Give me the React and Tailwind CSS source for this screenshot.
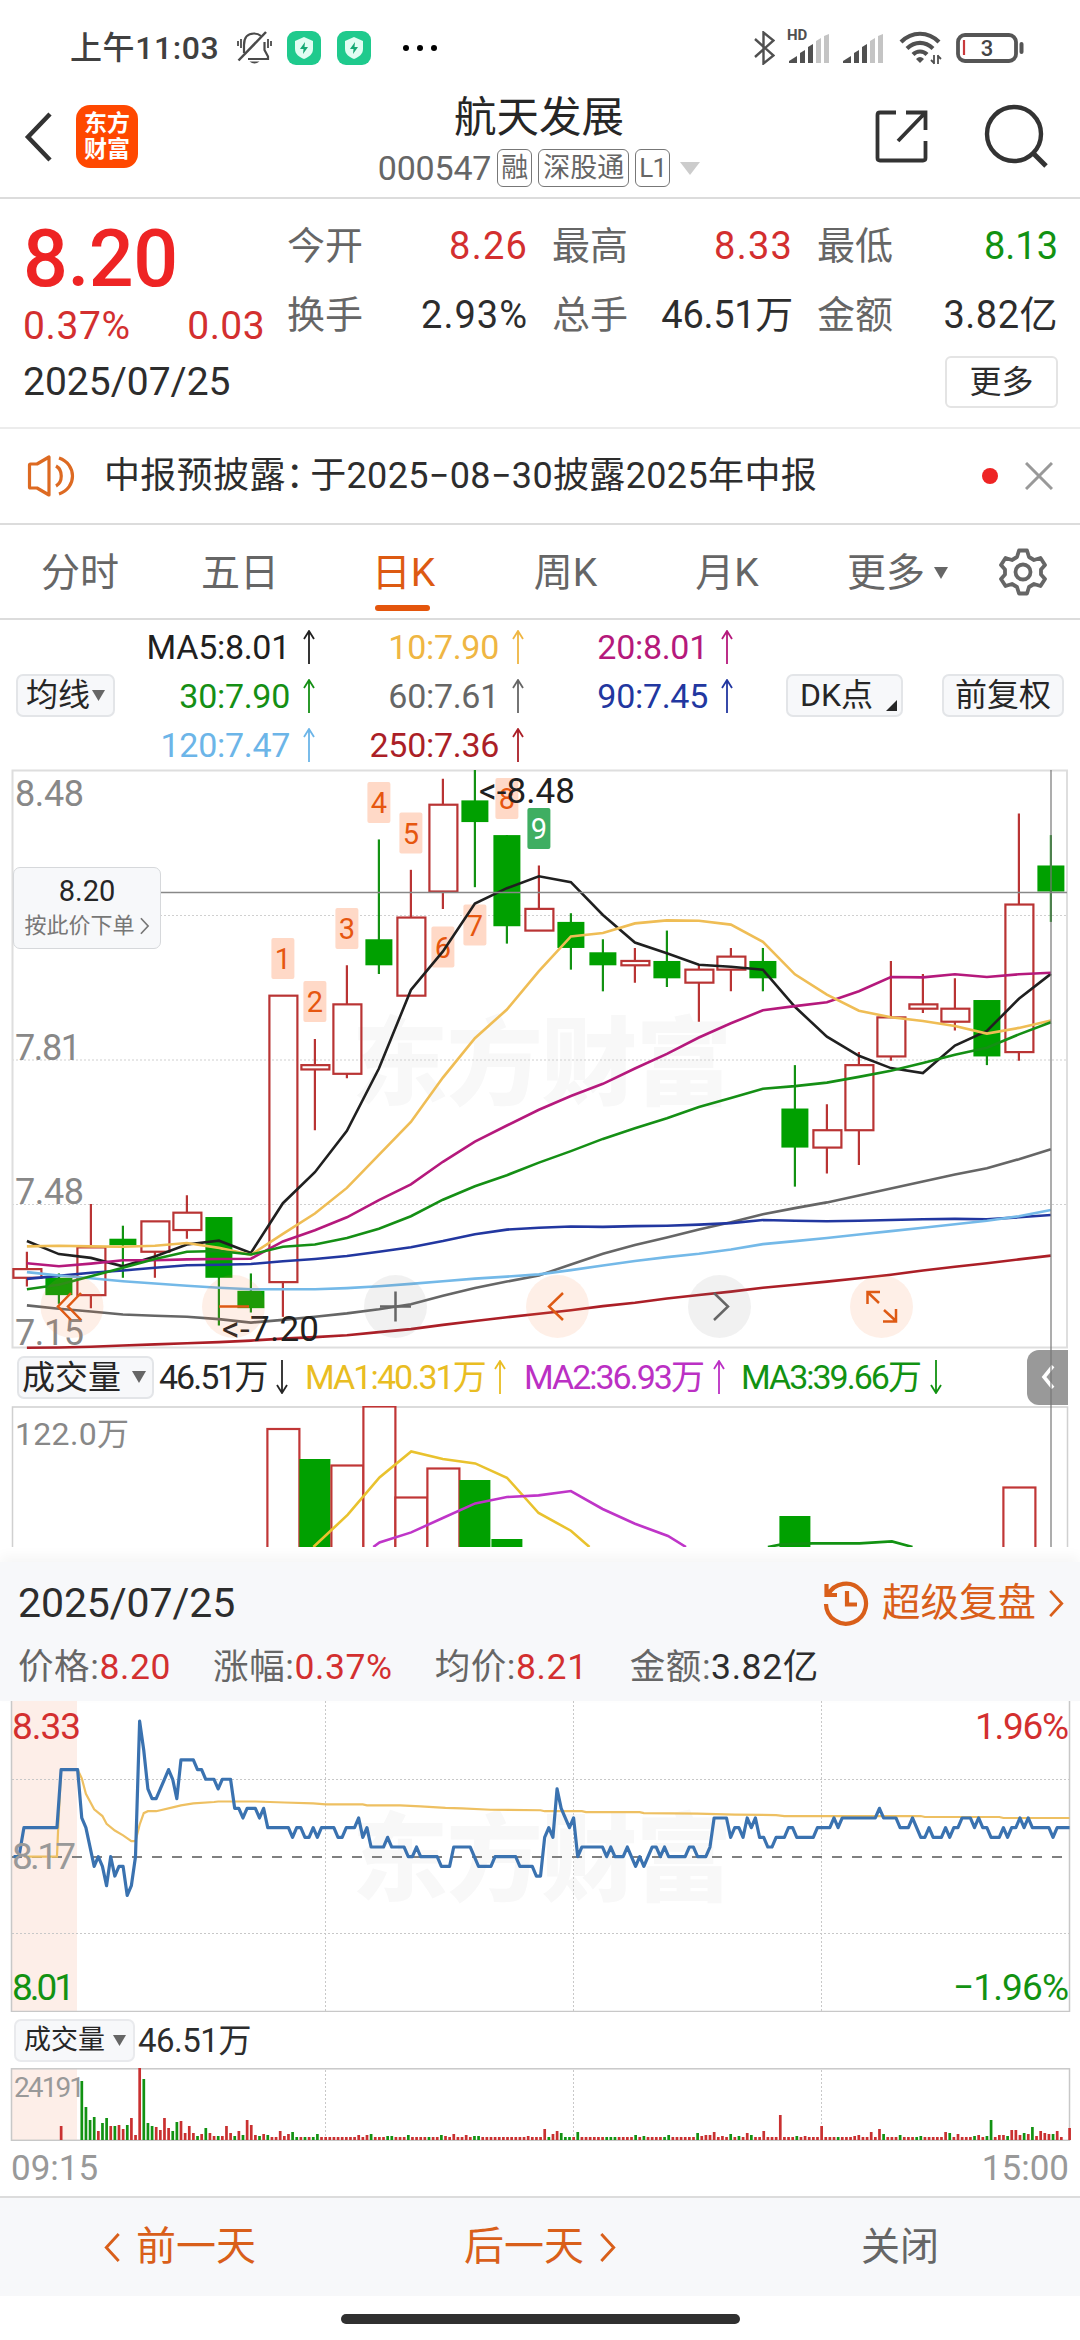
const STEP = 32;
const FIRST_X = 26.9;
const cx = (i) => FIRST_X + i * STEP;
const priceY = (p) => (8.48 - p) * 434;

// [open, close, high, low]
const CANDLES = [
  [7.31, 7.33, 7.37, 7.29],
  [7.31, 7.27, 7.32, 7.25],
  [7.27, 7.38, 7.48, 7.24],
  [7.4, 7.385, 7.43, 7.31],
  [7.37, 7.44, 7.44, 7.31],
  [7.42, 7.46, 7.5, 7.4],
  [7.45, 7.31, 7.45, 7.2],
  [7.28, 7.24, 7.32, 7.23],
  [7.3, 7.96, 7.96, 7.22],
  [7.79, 7.8, 7.86, 7.65],
  [7.78, 7.94, 8.03, 7.77],
  [8.09, 8.03, 8.32, 8.01],
  [7.96, 8.14, 8.25, 7.96],
  [8.2, 8.4, 8.46, 8.16],
  [8.41, 8.36, 8.48, 8.21],
  [8.33, 8.12, 8.33, 8.08],
  [8.11, 8.16, 8.26, 8.11],
  [8.13, 8.07, 8.15, 8.02],
  [8.06, 8.03, 8.09, 7.97],
  [8.03, 8.04, 8.07, 7.99],
  [8.04, 8.0, 8.11, 7.98],
  [7.99, 8.02, 8.03, 7.9],
  [8.02, 8.05, 8.07, 7.97],
  [8.04, 8.0, 8.07, 7.97],
  [7.7, 7.61, 7.8, 7.52],
  [7.61, 7.65, 7.71, 7.55],
  [7.65, 7.8, 7.83, 7.57],
  [7.82, 7.91, 8.04, 7.81],
  [7.93, 7.94, 8.01, 7.92],
  [7.9, 7.93, 8.0, 7.88],
  [7.95, 7.82, 7.95, 7.8],
  [7.83, 8.17, 8.38, 7.81],
  [8.26, 8.2, 8.33, 8.13],
];

const AVERAGES = [
  {
    color: '#666666',
    ys: [535.4, 538.8, 541.5, 544.5, 545.7, 546.8, 549.1, 552.6, 549.9, 546.8, 543.4, 539.2, 534.2, 525.8, 518.1, 511.6, 505.5, 494.4, 483.7, 474.9, 467.6, 459.6, 452.3, 444.3, 438.1, 432.4, 425.5, 418.6, 411.4, 404.5, 398.3, 389.2, 379.2],
  },
  {
    color: '#2237a0',
    ys: [508.9, 505.9, 502.8, 500.5, 497.8, 495.2, 494.8, 494, 491.3, 489, 486, 481.8, 477.2, 471.1, 464.2, 459.6, 457.7, 456.5, 456.9, 456.1, 455.7, 454.6, 453.1, 450, 450.8, 451.2, 450.8, 450, 449.2, 448.9, 449.2, 447.3, 445],
  },
  {
    color: '#74b9e8',
    ys: [502.1, 505.5, 508.2, 511.2, 513.5, 515.8, 517.7, 519.3, 519.3, 519.3, 518.1, 516.2, 513.9, 511.2, 508.6, 506.6, 504.4, 500.1, 495.5, 491, 487.1, 483.7, 479.5, 474.1, 471.1, 468, 464.5, 461.1, 457.7, 454.2, 450.8, 446.2, 440],
  },
  {
    color: '#ab1f27',
    ys: [577.8, 577.5, 576.7, 575.5, 574.4, 573.2, 572.1, 570.6, 568.6, 567.1, 565.2, 562.1, 559.1, 554.9, 551, 547.2, 543.8, 540.3, 536.1, 532.7, 528.5, 525, 521.6, 517.8, 514.7, 511.6, 508.2, 504.7, 500.5, 496.7, 493.3, 489.4, 485.6],
  },
  {
    color: '#202020',
    ys: [471, 484.1, 487.9, 496.3, 486.4, 474.5, 470.7, 482.9, 433.2, 402.2, 360.8, 298.5, 220, 181.4, 133.5, 118.2, 106.3, 112.1, 145, 172.5, 183.3, 194.7, 196.7, 199.7, 236.8, 266.7, 285.8, 298.1, 303, 275.5, 261, 228.8, 203.9],
  },
  {
    color: '#b5197c',
    ys: [493.3, 496.3, 493.6, 490.2, 490.2, 489.4, 489, 488.7, 471.4, 460.3, 447.3, 430.1, 414.4, 391.8, 371.6, 355.5, 339.8, 326, 313.8, 298.5, 283.9, 267.5, 253.3, 240.3, 236.1, 232.3, 221.2, 207, 207.4, 204.3, 207, 204.3, 202.8],
  },
  {
    color: '#efbd55',
    ys: [476.4, 475.7, 476.4, 476.8, 475.7, 473, 477.9, 484.8, 463.8, 443.5, 417.9, 384.9, 352, 307.6, 268.2, 239.5, 201.2, 166.4, 163, 153.4, 150.4, 150.7, 154.6, 171.8, 204.3, 224.6, 240.7, 247.2, 251, 256, 263.6, 257.9, 250.6],
  },
  {
    color: '#158f15',
    ys: [519.3, 514.7, 506.3, 497.8, 489, 481.8, 481, 484.5, 476.8, 474.5, 468, 458.8, 446.2, 429.7, 416.3, 405.2, 392.6, 381.1, 368.9, 358.2, 348.2, 337.1, 327.9, 318.7, 316.1, 312.6, 306.9, 300.8, 293.1, 284.7, 277.8, 264.4, 252.2],
  },
];

// top of each countdown badge, starting with candle 8
const BADGE_TOPS = [168, 211, 138, 12, 42.5, 156.5, 134.5, 8, 38];

const MA_ROWS = [
  [
    { label: 'MA5:8.01', color: 'text-[#202020]' },
    { label: '10:7.90', color: 'text-[#efb643]' },
    { label: '20:8.01', color: 'text-[#b5197c]' },
  ],
  [
    { label: '30:7.90', color: 'text-[#158f15]' },
    { label: '60:7.61', color: 'text-[#666666]' },
    { label: '90:7.45', color: 'text-[#2237a0]' },
  ],
  [
    { label: '120:7.47', color: 'text-[#6cb5e8]' },
    { label: '250:7.36', color: 'text-[#ab1f27]' },
  ],
];

// [minute, ticks above 8.17]
const MINUTES = [
  [0.5, 0], [1.8, 0], [3, 3], [11, 3], [12, 9], [16, 9], [17, 4], [18, 3], [20, -1], [21, 0], [22, -1], [23, -3], [24, 0],
  [25, -2], [26, -1], [27, -1], [28, -4], [29, -3], [30, 0], [31, 14], [32, 11], [33, 7], [34, 6], [35, 6], [37, 8],
  [38, 9], [39, 8], [40, 6], [41, 10], [44, 10], [45, 9], [46, 9], [47, 8], [49, 8], [50, 7], [51, 8], [53, 8], [54, 5],
  [55, 5], [56, 4], [57, 5], [59, 5], [60, 4], [61, 5], [62, 3], [67, 3], [68, 2], [69, 3], [70, 3], [71, 2], [72, 2],
  [73, 3], [74, 2], [75, 3], [78, 3], [79, 2], [80, 2], [81, 3], [83, 3], [84, 4], [85, 2], [86, 3], [87, 1], [90, 1],
  [91, 2], [92, 1], [95, 1], [96, 0], [97, 0], [98, 1], [99, 0], [103, 0], [104, -1], [106, -1], [107, 1], [111, 1],
  [113, -1], [116, -1], [117, 0], [122, 0], [123, -1], [126, -1], [127, -2], [128, -2], [129, 2], [130, 3], [131, 2],
  [132, 7], [133, 5], [135, 3], [136, 4], [137, 0], [138, 1], [143, 1], [144, 0], [145, 1], [146, 0], [148, 0],
  [149, 1], [151, -1], [152, 0], [153, -1], [155, 1], [156, 1], [157, 0], [158, 1], [159, 0], [163, 0], [164, 1],
  [165, 1], [166, 0], [168, 0], [169, 1], [170, 4], [173, 4], [174, 2], [175, 3], [176, 3], [177, 2], [178, 4],
  [179, 3], [180, 4], [181, 2], [182, 2], [183, 1], [184, 1], [185, 2], [187, 2], [188, 3], [189, 3], [190, 2],
  [194, 2], [195, 3], [198, 3], [199, 4], [200, 3], [201, 4], [209, 4], [210, 5], [211, 4], [214, 4], [215, 3],
  [217, 3], [218, 4], [220, 2], [221, 2], [222, 3], [223, 2], [225, 2], [226, 3], [227, 2], [228, 3], [229, 3],
  [230, 4], [232, 4], [233, 3], [234, 4], [235, 3], [236, 3], [237, 2], [239, 2], [240, 3], [241, 2], [242, 3],
  [243, 3], [244, 4], [245, 3], [246, 4], [247, 3], [251, 3], [252, 2], [253, 3], [256, 3],
];

const AVG_PRICE = [
  [3, 0], [11, 0], [11.3, 3], [12, 9], [16, 9], [17, 8.1], [18, 6.5], [20, 4.9], [22, 4.2], [23, 3.4], [25, 2.7], [27, 2.2],
  [29, 1.6], [30, 1.6], [31, 3.3], [32, 4.5], [33, 4.7], [35, 4.7], [39, 5.1], [41, 5.3], [44, 5.5], [49, 5.65],
  [50, 5.7], [59, 5.7], [66, 5.6], [73, 5.5], [76, 5.4], [85, 5.4], [86, 5.3], [94, 5.3], [99, 5.2], [105, 5.05],
  [109, 5], [116, 4.85], [128, 4.8], [129, 4.7], [138, 4.7], [139, 4.6], [152, 4.6], [153, 4.5], [166, 4.45],
  [175, 4.35], [185, 4.3], [187, 4.2], [220, 4.2], [221, 4.1], [239, 4.1], [240, 4], [256, 4],
];

const OPENING_VOLUME =
  'g59 g33 g20 g23 r9 g17 g22 r14 g14 r15 r11 g15 r22 r5 r72 g61 g17 g14 r13 r10 r22 r12 g9 g18 r19 r7 r14 r7 g4 r6 g12 r7 r4 g4 r4 r14 r7 g4 r9 g5 r20 r15 r5 g4 r6 g5 r3 r3 r9 r4 r6 g8 g3'.split(
    ' ',
  );

const LATER_VOLUME = {
  71: 'g3', 72: 'r3', 73: 'g3', 74: 'g6', 84: 'r5', 86: 'r5', 87: 'g6', 91: 'g4', 92: 'g4', 96: 'g5', 101: 'g3',
  104: 'g5', 105: 'r4', 107: 'r6', 110: 'r5', 112: 'g4', 113: 'g4', 125: 'r4', 129: 'r11', 130: 'g3', 131: 'r6',
  132: 'r9', 133: 'g7', 134: 'g3', 135: 'g3', 137: 'g8', 144: 'g3', 145: 'g3', 146: 'g3', 151: 'g5', 153: 'g4',
  158: 'g3', 159: 'g5', 166: 'g7', 167: 'r4', 168: 'r5', 169: 'r5', 170: 'r8', 172: 'r4', 174: 'g6', 176: 'g4',
  178: 'r7', 179: 'g5', 182: 'r9', 186: 'r25', 190: 'g4', 192: 'r4', 196: 'r14', 200: 'g3', 204: 'r4', 205: 'r5',
  208: 'r8', 210: 'r11', 211: 'g6', 215: 'g5', 219: 'g3', 220: 'g4', 226: 'r8', 227: 'g7', 229: 'r6', 233: 'g4',
  234: 'r5', 236: 'g4', 237: 'g20', 239: 'r5', 240: 'r5', 241: 'g4', 242: 'r10', 243: 'r10', 244: 'r5', 245: 'g7',
  246: 'r6', 247: 'g13', 248: 'r4', 249: 'r9', 250: 'r7', 251: 'r6', 252: 'g6', 253: 'r9', 254: 'r3', 255: 'r0',
  256: 'r12',
};

const minuteX = (m) => 11.5 + m * 4.133;

function Arrow({ down }) {
  return (
    <svg
      className={`h-[34px] w-3 shrink-0 ${down ? 'rotate-180' : ''}`}
      viewBox="0 0 12 34"
      fill="none"
      stroke="currentColor"
      strokeWidth="1.8"
    >
      <path d="M6 34V2M1 9L6 1L11 9" />
    </svg>
  );
}

function Chevron({ left, className }) {
  return (
    <svg className={className} viewBox="0 0 16 30" fill="none" stroke="currentColor" strokeWidth="2.8">
      <path d={left ? 'M14 2L2 15L14 28' : 'M2 2L14 15L2 28'} />
    </svg>
  );
}

function Triangle({ className }) {
  return (
    <svg className={className} viewBox="0 0 12 12" preserveAspectRatio="none" fill="currentColor">
      <path d="M0 0H12L6 12Z" />
    </svg>
  );
}

function MutedBell() {
  return (
    <svg className="h-[34px] w-[35px]" viewBox="0 0 35 34" fill="none" stroke="#4a4a4a" strokeWidth="2.2">
      <path d="M7 22V14C7 6 11 2.500 17 2.500C20 2.500 22 3.200 24 5M27.500 11V19L31 25.500V28H11" />
      <path d="M29 1L1.500 29.500" strokeWidth="2.500" />
      <path d="M4 8V17M1 10V15M31 8V17M34 10V15" strokeWidth="1.800" />
      <path d="M12.500 30.500H22.500Q17.500 34.500 12.500 30.500Z" fill="#4a4a4a" stroke="none" />
    </svg>
  );
}

function Signal() {
  return (
    <svg className="h-[29px] w-[41px]" viewBox="0 0 41 29">
      <path d="M0 29V27L8 22V29Z" fill="#505050" />
      <path d="M11 29V19L16 16V29Z" fill="#505050" />
      <path d="M19 29V13L24 10V29Z" fill="#505050" />
      <path d="M27 29V7L32 4V29ZM35 29V2L40 0V29Z" fill="#c4c4c4" />
    </svg>
  );
}

function Shield() {
  return (
    <div className="flex size-[34px] items-center justify-center rounded-[9px] bg-[#1fca8d]">
      <svg className="h-[22px] w-[20px]" viewBox="0 0 20 22">
        <path d="M10 0L19 4V12C19 17 15 20 10 22C5 20 1 17 1 12V4Z" fill="#e2fdf2" />
        <path d="M11 5L6 12H9.500L9 17L14 10H10.500Z" fill="#16a873" />
      </svg>
    </div>
  );
}

function StatusBar() {
  return (
    <div className="flex h-[95px] shrink-0 items-center pl-[70px] pr-[56px]">
      <span className="w-[167px] whitespace-nowrap text-[32px] font-medium tracking-[0.6px] text-[#404040]">
        上午11:03
      </span>
      <MutedBell />
      <div className="ml-[15px] flex gap-4">
        <Shield />
        <Shield />
      </div>
      <div className="ml-[32px] flex gap-[8px]">
        <i className="size-[6px] rounded-full bg-black" />
        <i className="size-[6px] rounded-full bg-black" />
        <i className="size-[6px] rounded-full bg-black" />
      </div>
      <div className="ml-auto flex items-center">
        <svg className="h-[34px] w-[21px]" viewBox="0 0 21 34" fill="none" stroke="#505050" strokeWidth="2.400">
          <path d="M1 8L19.500 24.500L9.500 32.500V1.500L19.500 9.500L1 26" />
        </svg>
        <div className="relative ml-[14px] pt-[2px]">
          <span className="absolute -left-[2px] -top-[5px] text-[15px] font-bold leading-4 text-[#505050]">HD</span>
          <Signal />
        </div>
        <div className="ml-[13px] pt-[2px]">
          <Signal />
        </div>
        <svg className="ml-[15px] h-[34px] w-[44px]" viewBox="0 0 44 34" fill="none" stroke="#505050" strokeWidth="4.200">
          <path d="M2 11C13 0 29 0 40 11" />
          <path d="M8 17.500C16 10 26 10 34 17.500" />
          <path d="M14 23.500C18 19.500 24 19.500 28 23.500" />
          <path d="M17 28Q21 24 25 28L21 32Z" fill="#505050" stroke="none" />
          <path d="M35 24V33M35.500 32.500L32 29M39 33V24M38.500 24.500L42 28" strokeWidth="1.800" />
        </svg>
        <svg className="ml-[13px] h-[30px] w-[68px]" viewBox="0 0 68 30">
          <rect x="2" y="2" width="58" height="26" rx="7" fill="none" stroke="#555" strokeWidth="3.800" />
          <path d="M65.500 11V19" stroke="#555" strokeWidth="4" strokeLinecap="round" />
          <path d="M8 7V22" stroke="#c93a3c" strokeWidth="2.200" />
          <text x="31" y="22.500" textAnchor="middle" fontSize="22" fontWeight="500" fill="#444">
            3
          </text>
        </svg>
      </div>
    </div>
  );
}

function Header() {
  return (
    <div className="flex h-[104px] shrink-0 justify-between border-b-2 border-[#dcdcdc] pl-6 pr-[30px]">
      <div className="flex w-[330px] items-start gap-6 pt-[10px]">
        <svg className="mt-[7px] h-[50px] w-[28px]" viewBox="0 0 28 50" fill="none" stroke="#333" strokeWidth="4.500">
          <path d="M26 2L4 25L26 48" />
        </svg>
        <div className="flex h-[63px] w-[62px] flex-col items-center justify-center rounded-[14px] bg-[#ff4800] text-[23px] font-bold leading-[26px] text-white">
          <span>东方</span>
          <span>财富</span>
        </div>
      </div>
      <div className="flex flex-col items-center whitespace-nowrap">
        <h1 className="pl-1 text-[42.5px] leading-[46px] text-[#262626]">航天发展</h1>
        <div className="mt-[8px] flex items-center gap-[6px] pl-1 text-[#666]">
          <span className="text-[34px] leading-[38px] tracking-[-0.2px]">000547</span>
          <span className="rounded-[6px] border border-[#777] px-[3px] text-[27px] leading-[36px]">融</span>
          <span className="rounded-[6px] border border-[#777] px-[4px] text-[27px] leading-[36px]">深股通</span>
          <span className="rounded-[6px] border border-[#777] px-[3px] text-[26px] leading-[36px] tracking-[-0.8px]">L1</span>
          <Triangle className="ml-1 h-[13px] w-5 text-[#ccc]" />
        </div>
      </div>
      <div className="flex w-[330px] justify-end gap-[54px] pt-[9px]">
        <svg className="mt-[3px] h-[58px] w-[58px]" viewBox="0 0 58 58" fill="none" stroke="#333" strokeWidth="3.800">
          <path d="M24 5.500H8Q5.500 5.500 5.500 8V51Q5.500 53.500 8 53.500H51Q53.500 53.500 53.500 51V34M34 5.500H53.500V23M52 7L26 34" />
        </svg>
        <svg className="h-[66px] w-[66px]" viewBox="0 0 66 66" fill="none" stroke="#333" strokeWidth="4.400">
          <circle cx="30" cy="30" r="27" />
          <path d="M49 49L62 62" strokeWidth="5" />
        </svg>
      </div>
    </div>
  );
}

function Stat({ name, value, color, className }) {
  return (
    <div className={`flex items-center justify-between ${className}`}>
      <span className="text-[38px] text-[#666]">{name}</span>
      <span className={`text-[38px] ${color}`}>{value}</span>
    </div>
  );
}

function Quote() {
  return (
    <div className="flex h-[230px] shrink-0 flex-col border-b-2 border-[#ececec] pl-[23px] pr-[22px] text-[#2d2d2d]">
      <div className="flex">
        <div className="w-[265px] pt-[22px]">
          <div className="text-[79px] font-medium leading-[76px] tracking-[-0.5px] text-[#ee2424]">8.20</div>
          <div className="mt-[7px] flex w-[242px] justify-between text-[39px] leading-[44px] text-[#d32f2f]">
            <span className="tracking-[0.6px]">0.37%</span>
            <span className="tracking-[0.4px]">0.03</span>
          </div>
        </div>
        <div className="flex flex-1 flex-col pt-[12px] leading-[68px]">
          <div className="flex h-[69px] gap-[24px]">
            <Stat name="今开" value="8.26" color="tracking-[1.2px] text-[#d32f2f]" className="w-[241px]" />
            <Stat name="最高" value="8.33" color="tracking-[1.2px] text-[#d32f2f]" className="w-[241px]" />
            <Stat name="最低" value="8.13" color="text-[#129212]" className="w-[241px]" />
          </div>
          <div className="flex h-[69px] gap-[24px]">
            <Stat name="换手" value="2.93%" color="tracking-[1px]" className="w-[241px]" />
            <Stat name="总手" value="46.51万" color="tracking-[-0.3px]" className="w-[241px]" />
            <Stat name="金额" value="3.82亿" color="tracking-[0.5px]" className="w-[241px]" />
          </div>
        </div>
      </div>
      <div className="mt-[7px] flex items-center justify-between">
        <span className="text-[39px] leading-[52px]">2025/07/25</span>
        <span className="w-[113px] rounded-[6px] border-2 border-[#e4e4e4] text-center text-[32px] leading-[48px]">
          更多
        </span>
      </div>
    </div>
  );
}

function Notice() {
  return (
    <div className="flex h-[96px] shrink-0 items-center border-b-2 border-[#dcdcdc] pl-[27px] pr-[27px]">
      <svg className="h-[42px] w-[48px]" viewBox="0 0 48 42" fill="none" stroke="#dd6a22" strokeWidth="3.200">
        <path d="M2.500 10Q2.500 9 3.500 9H10L22 2V40L10 33H3.500Q2.500 33 2.500 32Z" strokeLinejoin="round" />
        <path d="M29 11C36 15 36 27 29 31M32 3C50 9 50 33 32 39" />
      </svg>
      <span className="ml-[29px] whitespace-nowrap text-[36px] tracking-[0.35px] text-[#2d2d2d]">
        中报预披露<span className="-mr-[12px]">：</span>于2025−08−30披露2025年中报
      </span>
      <i className="ml-auto size-4 rounded-full bg-[#ee2424]" />
      <svg className="ml-[27px] size-[28px]" viewBox="0 0 28 28" stroke="#999" strokeWidth="3">
        <path d="M1 1L27 27M27 1L1 27" />
      </svg>
    </div>
  );
}

function Tabs() {
  return (
    <div className="flex h-[95px] shrink-0 items-center border-b-2 border-[#dcdcdc] pt-[3px] text-[39px] text-[#666]">
      <span className="w-[160px] text-center">分时</span>
      <span className="w-[160px] text-center">五日</span>
      <span className="relative w-[167px] text-center text-[#dd5a12]">
        日K
        <i className="absolute -bottom-[18px] left-[55px] h-[6px] w-[55px] rounded-full bg-[#e4550c]" />
      </span>
      <span className="w-[157px] text-center">周K</span>
      <span className="w-[166px] text-center">月K</span>
      <span className="ml-[37px]">更多</span>
      <Triangle className="ml-[9px] h-3 w-[14px]" />
      <svg className="mb-[3px] ml-[51px] size-[48px]" viewBox="0 0 48 48" fill="none" stroke="#666" strokeWidth="3.800">
        <path
          d="M20 2.500H28L30 9L35 12L41.500 10L46 17L42 21.500V26.500L46 31L41.500 38L35 36L30 39L28 45.500H20L18 39L13 36L6.500 38L2 31L6 26.500V21.500L2 17L6.500 10L13 12L18 9Z"
          strokeLinejoin="round"
        />
        <circle cx="24" cy="24" r="7.500" />
      </svg>
    </div>
  );
}

function MaLegend() {
  return (
    <div className="flex h-[150px] shrink-0 items-center pl-4 pr-4 text-[#262626]">
      <div className="flex h-[43px] w-[99px] items-center justify-center gap-[2px] rounded-[7px] border-2 border-[#e3e5e8] bg-[#f7f8fa] text-[32px]">
        均线
        <Triangle className="h-[11px] w-[13px] text-[#666]" />
      </div>
      <div className="flex h-full flex-col pt-[2px]">
        {MA_ROWS.map((row, r) => (
          <div key={r} className="flex h-[49px]">
            {row.map((ma, i) => (
              <div
                key={ma.label}
                className={`flex items-center justify-end gap-[13px] whitespace-nowrap text-[34px] tracking-[-0.3px] ${ma.color} ${
                  i === 0 ? 'w-[200px]' : 'w-[209px]'
                }`}
              >
                {ma.label}
                <Arrow />
              </div>
            ))}
          </div>
        ))}
      </div>
      <div className="relative ml-auto flex h-[43px] w-[117px] items-center rounded-[7px] border-2 border-[#e3e5e8] bg-[#f7f8fa] pl-3 text-[32px]">
        DK点
        <svg className="absolute bottom-[4px] right-[4px] size-[11px]" viewBox="0 0 11 11">
          <path d="M11 0V11H0Z" fill="#262626" />
        </svg>
      </div>
      <div className="ml-[39px] flex h-[43px] w-[122px] items-center justify-center rounded-[7px] border-2 border-[#e3e5e8] bg-[#f7f8fa] text-[32px]">
        前复权
      </div>
    </div>
  );
}

function Candle({ data, x }) {
  const [open, close, high, low] = data;
  const top = priceY(Math.max(open, close));
  const bottom = priceY(Math.min(open, close));
  if (close < open) {
    return (
      <g>
        <path d={`M${x} ${priceY(high)}V${priceY(low)}`} stroke="#129212" strokeWidth="2.2" />
        <rect x={x - 13.5} y={top} width="27" height={bottom - top} fill="#00a000" />
      </g>
    );
  }
  return (
    <g fill="none" stroke="#b93434" strokeWidth="2.2">
      <path d={`M${x} ${priceY(high)}V${top}M${x} ${bottom}V${priceY(low)}`} />
      <rect x={x - 13.5} y={top} width="28" height={bottom - top} />
    </g>
  );
}

function Watermark({ y }) {
  return (
    <text x="352" y={y} fontSize="96" fontWeight="900" textLength="380" fill="#f8f8f8">
      东方财富
    </text>
  );
}

function KChart() {
  return (
    <div className="relative h-[578px] shrink-0">
      <svg className="block h-[578px] w-[1080px] overflow-visible" viewBox="0 0 1080 578">
        <Watermark y={327} />
        <g stroke="#d0d0d0" strokeWidth="1.2" strokeDasharray="2 2">
          <path d="M12 145.500H1067M12 290H1067M12 434.500H1067" />
        </g>
        <rect x="12.500" y="0.500" width="1054.500" height="577" fill="none" stroke="#dedede" strokeWidth="2" />
        <g fontSize="36" fill="#888">
          <text x="15" y="36" textLength="69">8.48</text>
          <text x="15" y="290" textLength="66">7.81</text>
          <text x="15" y="434" textLength="69">7.48</text>
          <text x="15" y="575" textLength="69">7.15</text>
        </g>
        {CANDLES.map((c, i) => (
          <Candle key={i} data={c} x={cx(i)} />
        ))}
        {BADGE_TOPS.map((top, i) => (
          <g key={i}>
            <rect x={cx(i + 8) - 11.5} y={top} width="23" height="41" rx="2" fill={i === 8 ? '#3fae62' : '#ffd9c7'} />
            <text
              x={cx(i + 8)}
              y={top + 31}
              textAnchor="middle"
              fontSize="29"
              fill={i === 8 ? '#fff' : '#e6560f'}
            >
              {i + 1}
            </text>
          </g>
        ))}
        {AVERAGES.map((ma) => (
          <polyline
            key={ma.color}
            points={ma.ys.map((y, i) => `${cx(i)},${y}`).join(' ')}
            fill="none"
            stroke={ma.color}
            strokeWidth="2.6"
          />
        ))}
        <text x="479" y="33" fontSize="35" fill="#202020" textLength="96">
          {'<-8.48'}
        </text>
        <text x="222" y="571" fontSize="35" fill="#202020" textLength="97">
          {'<-7.20'}
        </text>
        <path d="M160 122.500H1067" stroke="#888" strokeWidth="1.700" />

        {/* Chart tools */}
        <g fill="#f47b3c" fillOpacity="0.12">
          <circle cx="72" cy="536.500" r="31.500" />
          <circle cx="233.500" cy="536.500" r="31.500" />
          <circle cx="557.500" cy="536.500" r="31.500" />
          <circle cx="881.500" cy="536.500" r="31.500" />
        </g>
        <g fill="#777" fillOpacity="0.1">
          <circle cx="395.500" cy="536.500" r="31.500" />
          <circle cx="719.500" cy="536.500" r="31.500" />
        </g>
        <g fill="none" stroke="#de5a14" strokeWidth="2.500">
          <path d="M71 523L58 536.500L71 550M81 523L68 536.500L81 550M219 536.500H249" />
          <path d="M563 523L549 536.500L563 550" />
          <path d="M880 522H867.500V534M868 522.500L879 533M884 540L896 551M896 539V551.500H883" />
        </g>
        <g fill="none" stroke="#666" strokeWidth="2.500">
          <path d="M380 536.500H411M395.500 521.500V551.500M714 523L728 536.500L714 550" />
        </g>
      </svg>
      <div className="absolute left-[13px] top-[97px] flex h-[82px] w-[148px] flex-col items-center rounded-[7px] border border-[#d6d8db] bg-[#f7f8fa] pt-[5px]">
        <span className="text-[29px] leading-[36px] text-[#262626]">8.20</span>
        <span className="flex items-center gap-[4px] whitespace-nowrap pt-[3px] text-[22px] leading-[28px] text-[#777]">
          按此价下单
          <Chevron className="h-[18px] w-[11px]" />
        </span>
      </div>
    </div>
  );
}

function VolumeRow() {
  return (
    <div className="flex h-[58px] shrink-0 items-center whitespace-nowrap pl-[17px] text-[34px]">
      <div className="flex h-[43px] w-[137px] items-center justify-between rounded-[7px] border-2 border-[#e3e5e8] bg-[#f7f8fa] pl-[3px] pr-[6px] text-[33px] text-[#262626]">
        成交量
        <Triangle className="h-3 w-[14px] text-[#666]" />
      </div>
      <div className="ml-[5px] flex w-[146px] items-center justify-between pr-[17px] tracking-[-2px] text-[#262626]">
        46.51万
        <Arrow down />
      </div>
      <div className="flex w-[219px] items-center justify-between pr-[18px] tracking-[-1.9px] text-[#e9bd22]">
        MA1:40.31万
        <Arrow />
      </div>
      <div className="flex w-[217px] items-center justify-between pr-[16px] tracking-[-2px] text-[#bb30c4]">
        MA2:36.93万
        <Arrow />
      </div>
      <div className="flex w-[201px] items-center justify-between tracking-[-2px] text-[#129212]">
        MA3:39.66万
        <Arrow down />
      </div>
      <div className="ml-auto mr-[12px] flex h-[55px] w-[41px] items-center justify-center rounded-l-[12px] bg-[#999] text-white">
        <svg className="h-[26px] w-[14px]" viewBox="0 0 14 26" fill="none" stroke="currentColor" strokeWidth="3.600">
          <path d="M12 2L3 13L12 24" />
        </svg>
      </div>
    </div>
  );
}

const VOLUME_BARS = [
  [8, 23, 'r'], [9, 53, 'g'], [10, 59.5, 'r'], [11, 0.5, 'r'], [12, 91.5, 'r'], [13, 62.5, 'r'],
  [14, 74, 'g'], [15, 133, 'g'], [24, 110, 'g'], [31, 81.5, 'r'],
];

function VolumeChart() {
  return (
    <svg className="block h-[141px] w-[1080px] shrink-0" viewBox="0 0 1080 141">
      <path d="M12.500 141V1H1067.500V141" fill="none" stroke="#d0d0d0" strokeWidth="1.500" />
      <text x="15" y="39" fontSize="32" fill="#888" textLength="114">
        122.0万
      </text>
      {VOLUME_BARS.map(([i, top, kind]) =>
        kind === 'g' ? (
          <rect key={i} x={cx(i) - 15.5} y={top} width="31" height={141 - top} fill="#00a000" />
        ) : (
          <rect key={i} x={cx(i) - 15.5} y={top} width="32" height="160" fill="#fff" stroke="#c03636" strokeWidth="2.2" />
        ),
      )}
      <g fill="none" strokeWidth="2.6">
        <polyline
          stroke="#e9c22e"
          points="313.4,141 347.8,108.7 379.5,71.4 411.2,45.4 442.8,53 475.2,57.4 506.9,71.7 538.6,107 570.9,124.7 589.5,141"
        />
        <polyline
          stroke="#bf35c8"
          points="373.3,141 379.5,136.4 411.2,126.4 442.8,112 475.2,97.4 506.9,91 538.6,89.4 570.9,85 602.6,103 635,117.7 668,130 686,141"
        />
        <polyline stroke="#129212" points="767.9,141 781.7,138.4 812.7,137.4 859.5,137.4 891.9,135.4 912.5,141" />
      </g>
    </svg>
  );
}

function Item({ name, value, color }) {
  return (
    <span className="text-[#666]">
      {name}:<span className={color}>{value}</span>
    </span>
  );
}

function ReplayHeader() {
  return (
    <div className="h-[139px] shrink-0 bg-[#f7f8fa] pl-[18px] pr-[16px] pt-[14px] shadow-[0_-6px_12px_rgba(0,0,0,0.04)]">
      <div className="flex h-[54px] items-center justify-between">
        <span className="text-[41px] tracking-[-0.1px] text-[#2d2d2d]">2025/07/25</span>
        <div className="flex items-center text-[38.5px] text-[#d95f1a]">
          <svg className="mr-[13px] h-[46px] w-[46px]" viewBox="0 0 46 46" fill="none" stroke="currentColor" strokeWidth="4.200">
            <path d="M5 15A20 20 0 1 1 3 24M3.500 4V15H14M24 11V24.500H34" />
            <path d="M2 6L2 17H13Z" fill="currentColor" stroke="none" />
          </svg>
          超级复盘
          <Chevron className="ml-[12px] h-[29px] w-4" />
        </div>
      </div>
      <div className="mt-[10px] flex h-[54px] items-center gap-[42px] whitespace-nowrap text-[35.5px] leading-[54px] tracking-[0.6px]">
        <Item name="价格" value="8.20" color="text-[#d32f2f]" />
        <Item name="涨幅" value="0.37%" color="text-[#d32f2f]" />
        <Item name="均价" value="8.21" color="text-[#d32f2f]" />
        <Item name="金额" value="3.82亿" color="text-[#2d2d2d]" />
      </div>
    </div>
  );
}

function MinuteChart() {
  const toPoints = (list) => list.map(([m, t]) => `${minuteX(m)},${155.7 - t * 9.68}`).join(' ');
  return (
    <svg className="block h-[311px] w-[1080px] shrink-0" viewBox="0 0 1080 311">
      <rect x="12" y="0" width="65" height="310" fill="#fdeee8" />
      <Watermark y={192} />
      <g stroke="#c8c8c8" strokeWidth="1" strokeDasharray="2 2">
        <path d="M12 78.500H1069M12 232.500H1069M325.500 0V310M573.500 0V310M821.500 0V310" />
      </g>
      <path d="M11.500 0V310.500H1069.500V0" fill="none" stroke="#c8c8c8" strokeWidth="1.500" />
      <path d="M12 156H1069" stroke="#808080" strokeWidth="2" strokeDasharray="10 10" />
      <g fontSize="37">
        <text x="12" y="38" fill="#d32f2f" textLength="69">8.33</text>
        <text x="12" y="299" fill="#129212" textLength="63">8.01</text>
        <text x="1069" y="38" textAnchor="end" fill="#d32f2f" textLength="94">1.96%</text>
        <text x="1069" y="299" textAnchor="end" fill="#129212" textLength="116">−1.96%</text>
      </g>
      <polyline points={toPoints(AVG_PRICE)} fill="none" stroke="#eec062" strokeWidth="2.2" />
      <polyline points={toPoints(MINUTES)} fill="none" stroke="#3a72b0" strokeWidth="3.2" strokeLinejoin="round" />
      <text x="12" y="168" fontSize="37" fill="#999" textLength="64">8.17</text>
    </svg>
  );
}

function MiniVolume() {
  const bars = [[12, 'r14']];
  for (let m = 17; m <= 256; m++) {
    bars.push([m, OPENING_VOLUME[m - 17] || LATER_VOLUME[m] || 'r3']);
  }
  return (
    <svg className="block h-[73px] w-[1080px] shrink-0" viewBox="0 0 1080 73">
      <rect x="12" y="0" width="65" height="73" fill="#fdeee8" />
      <path d="M325.500 2V73M573.500 2V73M821.500 2V73" stroke="#c8c8c8" strokeDasharray="2 2" />
      <rect x="11.500" y="0.800" width="1058" height="71.500" fill="none" stroke="#c8c8c8" strokeWidth="1.500" />
      {bars.map(([m, v]) => {
        const h = Number(v.slice(1));
        return (
          <rect
            key={m}
            x={minuteX(m) - 1.3}
            y={72 - h}
            width="2.700"
            height={h}
            fill={v[0] === 'g' ? '#129212' : '#c93030'}
          />
        );
      })}
      <text x="14" y="29" fontSize="28" fill="#999" textLength="71">24191</text>
    </svg>
  );
}

export default function App() {
  return (
    <div className="flex h-[2340px] w-[1080px] flex-col overflow-hidden bg-white font-[Roboto,'Noto_Sans_CJK_SC',sans-serif] leading-none">
      <StatusBar />
      <Header />
      <Quote />
      <Notice />
      <Tabs />
      <MaLegend />
      <div className="relative flex shrink-0 flex-col">
        <KChart />
        <VolumeRow />
        <VolumeChart />
        {/* Crosshair over both charts */}
        <i className="absolute bottom-0 left-[1050px] top-0 w-[2px] bg-[#777]/60" />
      </div>
      <div className="h-[15px] shrink-0" />
      <ReplayHeader />
      <MinuteChart />
      <div className="flex h-[56px] shrink-0 items-center pl-[14px]">
        <div className="flex h-[43px] w-[121px] items-center justify-between rounded-[7px] border-2 border-[#e9eaed] bg-[#f7f8fa] pl-[8px] pr-[7px] text-[27px] text-[#262626]">
          成交量
          <Triangle className="h-[11px] w-[13px] text-[#666]" />
        </div>
        <span className="ml-[3px] text-[33px] tracking-[-0.5px] text-[#2d2d2d]">46.51万</span>
      </div>
      <MiniVolume />
      <div className="flex h-[55px] shrink-0 items-center justify-between px-[11px] text-[35px] text-[#999]">
        <span>09:15</span>
        <span>15:00</span>
      </div>
      <div className="flex h-[100px] shrink-0 items-center border-t-2 border-[#dcdcdc] bg-[#f7f8fa] text-[40px] text-[#d95f1a]">
        <div className="flex w-[360px] items-center justify-center gap-[15px]">
          <Chevron left className="h-[31px] w-[17px]" />
          前一天
        </div>
        <div className="flex w-[360px] items-center justify-center gap-[15px]">
          后一天
          <Chevron className="h-[31px] w-[17px]" />
        </div>
        <div className="w-[360px] text-center text-[39px] text-[#666]">关闭</div>
      </div>
      <div className="flex flex-1 justify-center bg-white pt-[18px]">
        <i className="h-[10px] w-[399px] rounded-full bg-[#303030]" />
      </div>
    </div>
  );
}
